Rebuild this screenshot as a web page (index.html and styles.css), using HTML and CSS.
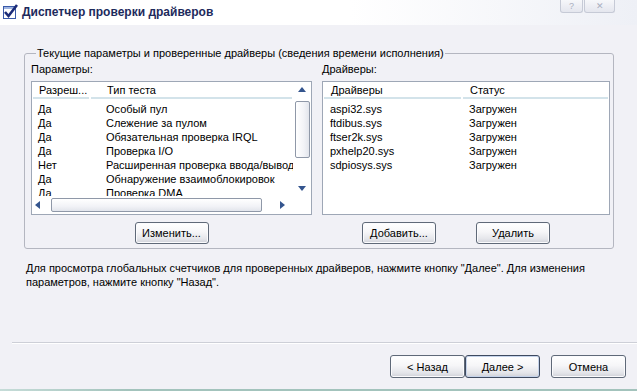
FILE: index.html
```html
<!DOCTYPE html>
<html lang="ru">
<head>
    <meta charset="UTF-8">
    <title>Диспетчер проверки драйверов</title>
    <link rel="stylesheet" href="styles.css">
</head>
<body>
    <!-- Header -->
    <div class="titlebar">
        <svg class="app-icon" width="16" height="16" viewBox="0 0 16 16">
            <rect x="1.5" y="3.5" width="12" height="12" fill="#fff" stroke="#3a5aa8"/>
            <rect x="2" y="4" width="11" height="2" fill="#9fb4e0"/>
            <path d="M3 9 L6.5 13 L15 2" fill="none" stroke="#1c2c78" stroke-width="2.6"/>
        </svg>
        <span class="title">Диспетчер проверки драйверов</span>
        <div class="tool-buttons">
            <span class="tool-btn help">?</span>
            <span class="tool-btn close">✕</span>
        </div>
    </div>

    <!-- Main group -->
    <fieldset class="group">
        <legend>Текущие параметры и проверенные драйверы (сведения времени исполнения)</legend>
        <div class="cols">
            <div class="col">
                <div class="label">Параметры:</div>
                <div class="list list-scroll">
                    <div class="list-main">
                        <div class="list-head params">
                            <span>Разреш...</span>
                            <span>Тип теста</span>
                        </div>
                        <div class="rows params">
                            <span>Да</span><span>Особый пул</span>
                            <span>Да</span><span>Слежение за пулом</span>
                            <span>Да</span><span>Обязательная проверка IRQL</span>
                            <span>Да</span><span>Проверка I/O</span>
                            <span>Нет</span><span>Расширенная проверка ввода/вывода</span>
                            <span>Да</span><span>Обнаружение взаимоблокировок</span>
                            <span>Да</span><span>Проверка DMA</span>
                        </div>
                    </div>
                    <div class="vbar">
                        <span class="arrow up"></span>
                        <span class="vthumb"></span>
                        <span class="arrow down"></span>
                    </div>
                    <div class="hbar">
                        <span class="arrow left"></span>
                        <span class="hthumb"></span>
                        <span class="arrow right"></span>
                    </div>
                    <div class="corner"></div>
                </div>
                <div class="btn-row center">
                    <button class="btn">Изменить...</button>
                </div>
            </div>
            <div class="col">
                <div class="label">Драйверы:</div>
                <div class="list">
                    <div class="list-head drivers">
                        <span>Драйверы</span>
                        <span>Статус</span>
                    </div>
                    <div class="rows drivers">
                        <span>aspi32.sys</span><span>Загружен</span>
                        <span>ftdibus.sys</span><span>Загружен</span>
                        <span>ftser2k.sys</span><span>Загружен</span>
                        <span>pxhelp20.sys</span><span>Загружен</span>
                        <span>sdpiosys.sys</span><span>Загружен</span>
                    </div>
                </div>
                <div class="btn-row pair">
                    <button class="btn">Добавить...</button>
                    <button class="btn">Удалить</button>
                </div>
            </div>
        </div>
    </fieldset>

    <p class="info">Для просмотра глобальных счетчиков для проверенных драйверов, нажмите кнопку "Далее". Для изменения параметров, нажмите кнопку "Назад".</p>

    <!-- Wizard buttons -->
    <div class="footer">
        <div class="sep"></div>
        <div class="wizard-buttons">
            <button class="btn wide">&lt; Назад</button>
            <button class="btn wide default">Далее &gt;</button>
            <button class="btn wide cancel">Отмена</button>
        </div>
        <div class="edge"></div>
    </div>
</body>
</html>
```

FILE: styles.css
```css
body {
    margin: 0;
    width: 637px;
    height: 391px;
    overflow: hidden;
    display: flex;
    flex-direction: column;
    background: #f1f1f6;
    color: #000;
    font-family: "Liberation Sans", Arial, sans-serif;
    font-size: 11px;
    line-height: 13px;
}
/* Header */
.titlebar {
    height: 25px;
    flex: none;
    display: flex;
    align-items: flex-start;
    background: linear-gradient(to right, #fff 0%, #fff 55%, #eef0f6 100%);
}
.app-icon {
    margin: 3px 0 0 2px;
}
.title {
    margin: 6px 0 0 4px;
    font-size: 12px;
    font-weight: bold;
    color: #1d2a5c;
}
.tool-buttons {
    margin-left: auto;
    margin-right: 22px;
    display: flex;
    gap: 1px;
}
.tool-btn {
    height: 12px;
    border: 1px solid #c6cad6;
    border-top: none;
    border-radius: 0 0 3px 3px;
    background: linear-gradient(#f6f7fa, #e4e6ee);
    color: #a9afbf;
    font-size: 9px;
    line-height: 12px;
    text-align: center;
}
.tool-btn.help { width: 21px; }
.tool-btn.close { width: 29px; }
/* Group box */
.group {
    flex: none;
    margin: 22px 23px 0 24px;
    padding: 0 2px 4px 6px;
    border: 1px solid #b4b6c0;
    border-radius: 3px;
    min-width: 0;
}
.group legend {
    margin-left: 5px;
    padding: 0 1px;
}
.cols {
    display: grid;
    grid-template-columns: 281px 288px;
    column-gap: 10px;
}
.label {
    margin-top: 3px;
}
.list {
    margin-top: 5px;
    height: 132px;
    border: 1px solid #9ea7b6;
    background: #fff;
    overflow: hidden;
}
.list-scroll {
    display: grid;
    grid-template-columns: 1fr 18px;
    grid-template-rows: 1fr 18px;
}
.list-main {
    min-width: 0;
    overflow: hidden;
}
.list-head {
    display: grid;
    height: 18px;
}
.list-head span {
    height: 15px;
    line-height: 16px;
    margin: 0 1px;
    border-bottom: 2px solid #d3e3ea;
}
.rows {
    display: grid;
    grid-auto-rows: 14px;
    padding-top: 2px;
    line-height: 14px;
}
.rows span, .list-head span {
    white-space: nowrap;
    overflow: hidden;
}
.params { grid-template-columns: 58px 1fr; }
.params span:nth-child(odd) { padding-left: 6px; }
.params span:nth-child(even) { padding-left: 16px; }
.drivers { grid-template-columns: 139px 1fr; }
.drivers span { padding-left: 7px; }
.list-head span:first-child { margin-left: 1px; }
/* Scrollbars */
.vbar {
    display: flex;
    flex-direction: column;
    align-items: center;
}
.vthumb {
    width: 13px;
    height: 55px;
    margin: 9px 0 28px;
    border: 1px solid #8f98a8;
    border-radius: 2px;
    background: linear-gradient(to right, #fff, #f2f3f7 60%, #e2e5ec);
}
.hbar {
    display: flex;
    align-items: center;
    padding-left: 3px;
}
.hthumb {
    width: 209px;
    height: 12px;
    margin: 0 18px 0 11px;
    border: 1px solid #8f98a8;
    border-radius: 2px;
    background: linear-gradient(#fff, #f2f3f7 60%, #e2e5ec);
}
.arrow {
    width: 0;
    height: 0;
    border: 4px solid transparent;
}
.arrow.up {
    margin-top: 5px;
    border-top: none;
    border-bottom: 5px solid #34558e;
}
.arrow.down {
    border-bottom: none;
    border-top: 5px solid #34558e;
}
.arrow.left {
    border-left: none;
    border-right: 5px solid #34558e;
}
.arrow.right {
    border-right: none;
    border-left: 5px solid #34558e;
}
/* Buttons */
.btn-row {
    display: flex;
    margin-top: 7px;
}
.btn-row.center { justify-content: center; }
.btn-row.pair {
    padding-left: 40px;
    gap: 40px;
}
.btn {
    width: 74px;
    height: 22px;
    padding: 0;
    border: 1px solid #5f6978;
    border-radius: 3px;
    background: linear-gradient(#ffffff, #f6f6f8 45%, #e4e5ea 80%, #cfd1d8);
    box-shadow: inset 0 0 0 1px #fbfbfd;
    color: #000;
    font-family: inherit;
    font-size: 11px;
}
.btn.wide {
    width: 75px;
    height: 23px;
}
.btn.default {
    border-color: #3e4a60;
    box-shadow: inset 0 0 0 1px #c5d3ea;
}
.btn.cancel {
    margin-left: 11px;
}
/* Info text */
.info {
    margin: 12px 20px 0 26px;
    line-height: 14px;
}
/* Footer */
.footer {
    margin-top: auto;
    flex: none;
}
.sep {
    margin-left: 12px;
    border-top: 1px solid #cdcfd7;
    border-bottom: 1px solid #fff;
}
.wizard-buttons {
    display: flex;
    justify-content: flex-end;
    padding: 11px 11px 11px 0;
}
.edge {
    height: 2px;
    background: linear-gradient(to right, #c6dcd8, #a3c3bc 20%, #a3c3bc);
}
```
